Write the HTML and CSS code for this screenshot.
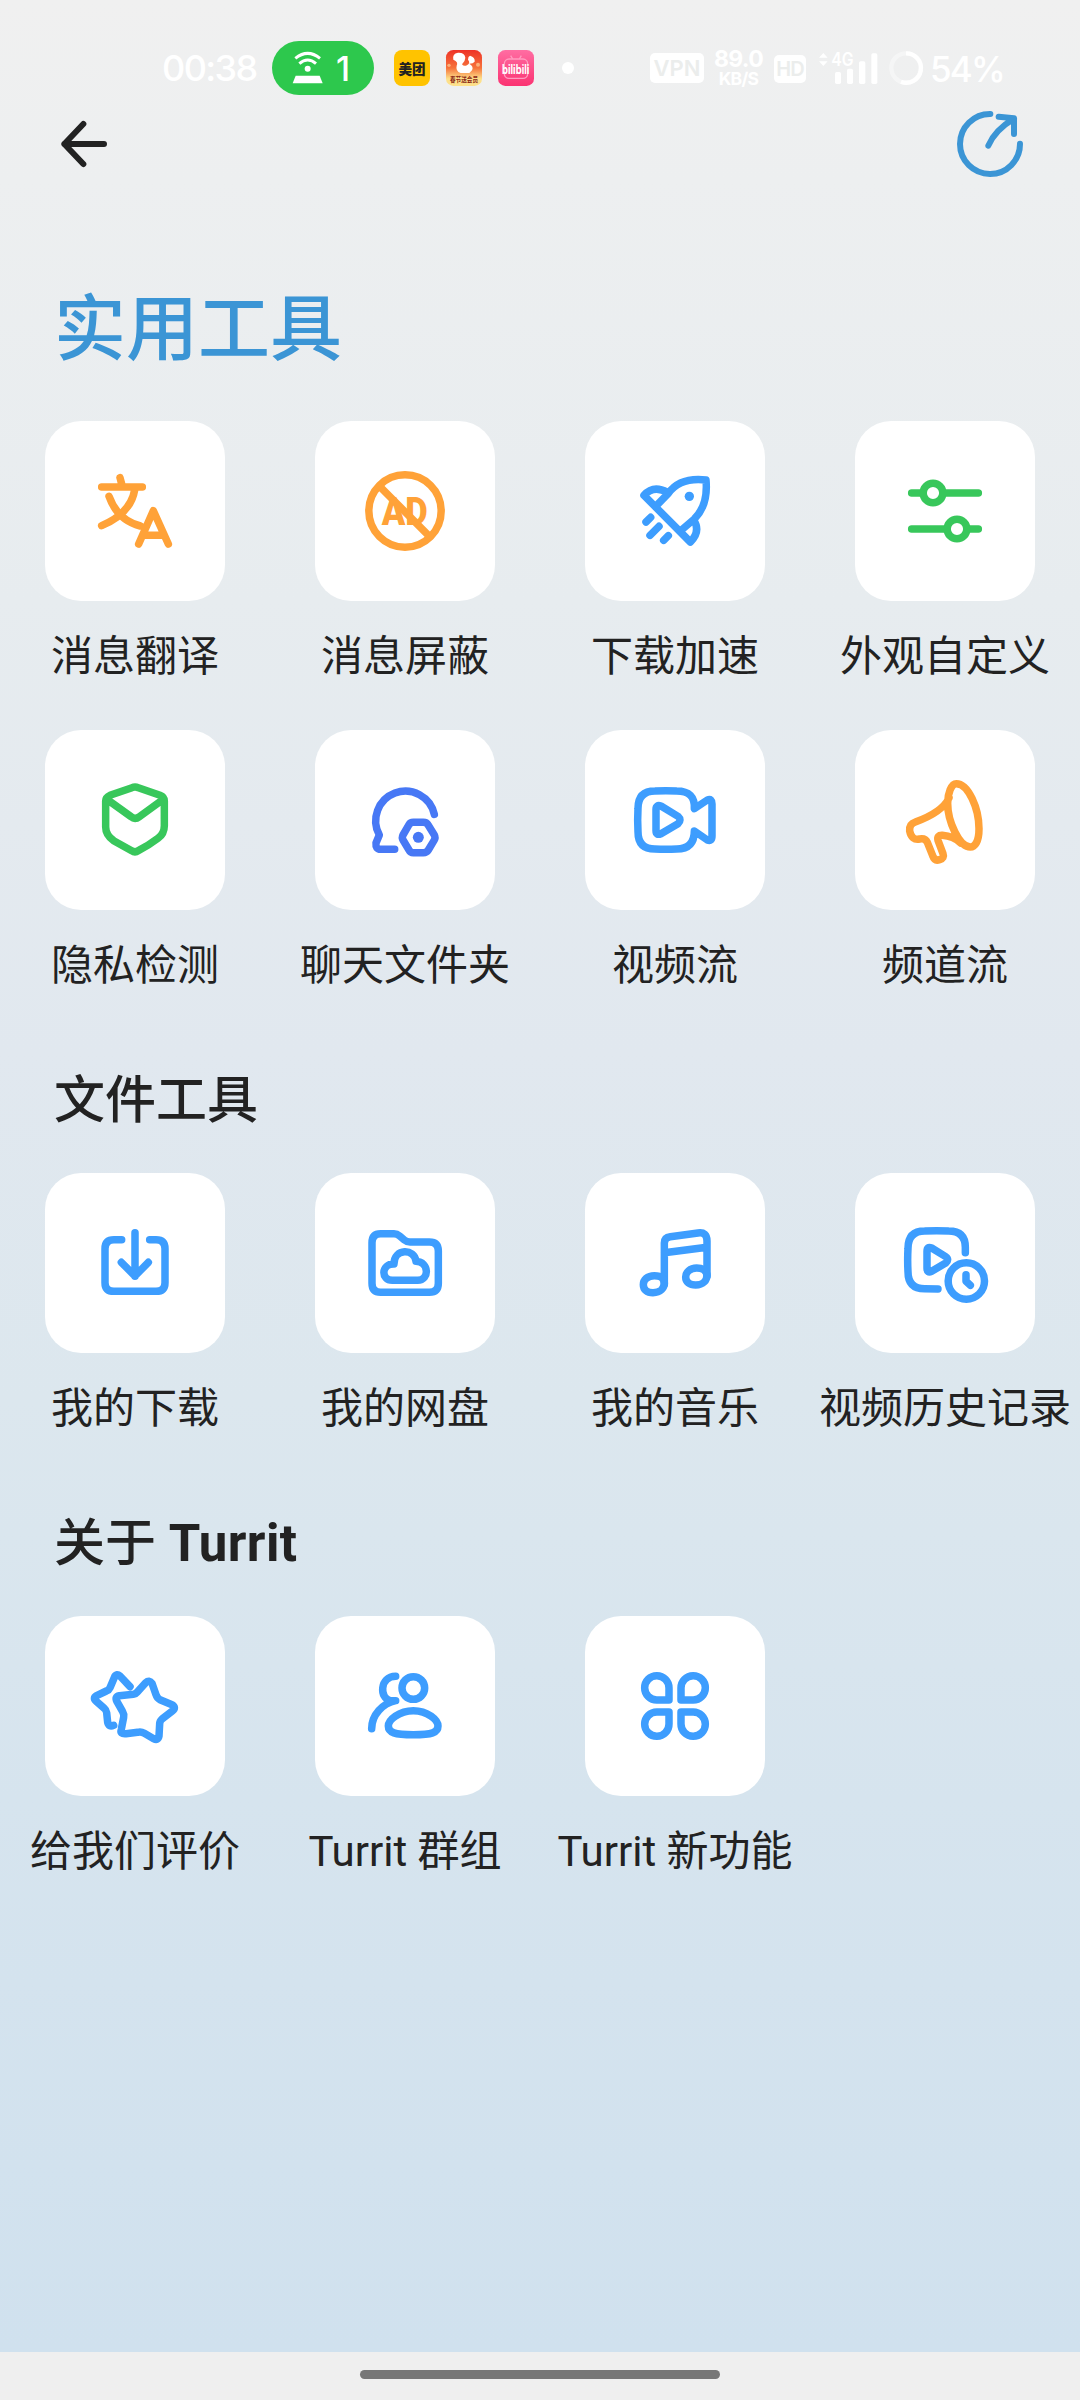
FILE: index.html
```html
<!DOCTYPE html>
<html lang="zh-CN">
<head>
<meta charset="utf-8">
<title>实用工具</title>
<link rel="stylesheet" href="styles.css">
</head>
<body>
<div class="screen">
  <div class="status">
    <span class="clock">00:38</span>
    <span class="hotspot">
      <svg width="32" height="34" viewBox="457 64 96 102"><g fill="none" stroke="#fff" stroke-width="9"><path d="M467 86Q504 56 541 86"/><path d="M479 102Q504 80 529 102"/></g><circle cx="504" cy="117" r="9" fill="#fff"/><path d="M468 138H540L549 161H459Z" fill="#fff"/></svg>
      <span>1</span>
    </span>
    <span class="app app-mt">美团</span>
    <span class="app app-sq">
      <svg width="36" height="36" viewBox="918 63 108 108"><defs><linearGradient id="sq" x1="0" y1="0" x2="0" y2="1"><stop offset="0" stop-color="#ee3227"/><stop offset=".5" stop-color="#f6733b"/><stop offset=".8" stop-color="#fde08a"/></linearGradient></defs><rect x="918" y="63" width="108" height="108" rx="22" fill="url(#sq)"/><path d="M940 92Q936 74 954 71Q974 70 976 86Q976 96 966 106Q972 114 982 108Q992 102 984 92Q984 82 990 80Q1006 84 1004 98Q1000 104 988 104Q1002 112 996 124L988 132H962Q946 126 950 110Q956 98 940 92Z" fill="#fff"/><circle cx="927" cy="109" r="5" fill="#fbb07a"/><circle cx="1014" cy="107" r="6" fill="#fbb07a"/><text x="930" y="160" class="sq-text" textLength="84" lengthAdjust="spacingAndGlyphs">春节送会员</text></svg>
    </span>
    <span class="app app-bili">
      <svg width="36" height="36" viewBox="1074 63 108 108"><defs><linearGradient id="bl" x1="0" y1="0" x2="0" y2="1"><stop offset="0" stop-color="#ff6da2"/><stop offset="1" stop-color="#fb3372"/></linearGradient></defs><rect x="1074" y="63" width="108" height="108" rx="22" fill="url(#bl)"/><g fill="none" stroke="#ff9cc0" stroke-width="4"><rect x="1093" y="90" width="70" height="58" rx="14"/><path d="M1112 80L1118 90M1144 80L1138 90"/></g><text x="1086" y="134" class="bili-text" textLength="82" lengthAdjust="spacingAndGlyphs">bilibili</text></svg>
    </span>
    <span class="dot"></span>
    <span class="vpn">VPN</span>
    <span class="speed"><b>89.0</b><i>KB/S</i></span>
    <span class="hd">HD</span>
    <svg class="signal" width="64" height="34" viewBox="652 64 192 102"><g fill="#fff"><path d="M658 84L671 70L684 84ZM658 95L671 109L684 95Z"/><rect x="706" y="127" width="18" height="36" rx="5"/><rect x="742" y="117" width="18" height="46" rx="5"/><rect x="778" y="95" width="19" height="68" rx="5"/><rect x="815" y="71" width="18" height="92" rx="5"/></g><text x="695" y="109" class="g4" textLength="67" lengthAdjust="spacingAndGlyphs">4G</text></svg>
    <svg class="ring" width="34" height="34" viewBox="869 64 102 102"><g fill="none" stroke="#fff" stroke-width="13"><circle cx="920" cy="115" r="44" opacity=".4"/><path d="M920 71A44 44 0 1 1 905 156"/></g></svg>
    <span class="battery">54%</span>
  </div>

  <header class="toolbar">
    <svg width="52" height="52" viewBox="168 54 156 156" class="stroke dark"><path d="M306 132H187M244 72L187 132L244 192"/></svg>
    <svg width="72" height="72" viewBox="1062 234 216 216" class="stroke accent"><path d="M1171 252A90 90 0 1 0 1260 341M1165 347Q1185 300 1242 266M1196 260L1242 265V312"/></svg>
  </header>

  <main>
    <h1>实用工具</h1>
    <div class="grid">
      <div class="item"><div class="tile"><svg viewBox="45 33 540 540" class="stroke orange"><path d="M270 203L275 222M215 231H337M237 259Q262 330 331 348M215 347Q302 310 314 240M326 402L370 302L415 402M344 376H398"/></svg></div><span class="label">消息翻译</span></div>
      <div class="item"><div class="tile"><svg viewBox="855 33 540 540" class="stroke orange"><circle cx="1125" cy="303" r="108.500"/><path d="M1049 229L1199 380"/><text x="1055" y="345" class="ad" textLength="138" lengthAdjust="spacingAndGlyphs">AD</text></svg></div><span class="label">消息屏蔽</span></div>
      <div class="item"><div class="tile"><svg viewBox="75 33 540 540" class="stroke blue"><path d="M290 286L325 250Q360 201 438 210Q445 285 403 327L361 363M252 256L391 396M252 256Q280 224 322 247M391 396Q423 364 401 330"/><path d="M258 336L272 322M270 376L297 349M311 391L325 377"/><circle cx="388" cy="259" r="14" class="solid"/></svg></div><span class="label">下载加速</span></div>
      <div class="item"><div class="tile"><svg viewBox="885 33 540 540" class="stroke green"><path d="M1055 249H1090M1150 249H1255M1055 357H1160M1220 357H1255"/><circle cx="1119" cy="249" r="29.500"/><circle cx="1191" cy="357" r="29.500"/></svg></div><span class="label">外观自定义</span></div>
      <div class="item"><div class="tile"><svg viewBox="45 30 540 540" class="stroke green"><path d="M306 203Q315 199 325 203L390 226Q403 231 403 243V317Q403 341 384 355Q358 375 325 392Q315 399 305 392L251 362Q227 345 227 321V243Q227 232 240 226ZM232 239L303 290Q315 300 328 290L398 239"/></svg></div><span class="label">隐私检测</span></div>
      <div class="item"><div class="tile"><svg viewBox="855 30 540 540" class="stroke indigo"><path d="M1213 283A89 89 0 1 0 1048 345L1038 369Q1036 388 1052 388H1094M1150 307H1180Q1190 307 1194 314L1213 345Q1217 353 1213 360L1195 390Q1190 398 1180 398H1150Q1141 398 1137 390L1119 360Q1115 353 1119 345L1137 314Q1141 307 1150 307Z"/><circle cx="1165" cy="352" r="16.500" class="solid"/></svg></div><span class="label">聊天文件夹</span></div>
      <div class="item"><div class="tile"><svg viewBox="75 30 540 540" class="stroke blue"><path d="M403 266Q406 213 350 213Q318 211 285 213Q234 213 234 265Q232 300 234 335Q234 387 285 387Q318 389 350 387Q403 387 403 333L442 360Q456 366 456 348V252Q456 235 442 240ZM288 268Q288 253 303 258L354 289Q366 300 354 311L303 341Q288 347 288 332Z"/></svg></div><span class="label">视频流</span></div>
      <div class="item"><div class="tile"><svg viewBox="885 30 540 540" class="stroke orange"><path d="M1189 191C1225 191 1257 266 1257 326C1257 366 1244 381 1231 381C1198 381 1163 305 1163 250C1163 220 1174 191 1189 191ZM1167 234C1150 270 1110 290 1066 306Q1047 312 1049 333Q1055 362 1079 357Q1096 354 1102 367L1118 407Q1124 424 1139 419Q1154 414 1149 401L1134 361Q1130 345 1147 346Q1181 349 1202 369"/></svg></div><span class="label">频道流</span></div>
    </div>

    <h2>文件工具</h2>
    <div class="grid">
      <div class="item"><div class="tile"><svg viewBox="45 369 540 540" class="stroke blue"><path d="M275 569H252Q225 569 225 596V698Q225 724 252 724H378Q405 724 405 698V596Q405 569 378 569H359M315 548V679M274 637L315 678L355 637"/></svg></div><span class="label">我的下载</span></div>
      <div class="item"><div class="tile"><svg viewBox="855 369 540 540" class="stroke blue"><path d="M1052 551H1092Q1101 551 1109 558L1123 570Q1130 576 1140 576H1198Q1225 576 1225 603V700Q1225 727 1198 727H1052Q1026 727 1026 700V578Q1026 551 1052 551ZM1092 642C1092 594 1154 595 1158 634C1198 636 1199 691 1163 691H1087C1052 691 1053 641 1092 642Z"/></svg></div><span class="label">我的网盘</span></div>
      <div class="item"><div class="tile"><svg viewBox="75 39 540 540" class="stroke blue"><path d="M313 373V249Q313 232 331 230L414 219Q441 215 441 243V348M313 278L441 262"/><path d="M313 373C313 351 298 347 283 347C262 347 250 360 250 374C250 388 260 398 279 398C302 398 313 384 313 368ZM441 348C441 328 424 324 410 324C390 324 377 337 377 351C377 366 388 375 407 375C430 375 441 361 441 344Z"/></svg></div><span class="label">我的音乐</span></div>
      <div class="item"><div class="tile"><svg viewBox="885 39 540 540" class="stroke blue"><path d="M1216 278V262Q1216 213 1166 213Q1130 211 1094 213Q1044 213 1044 265Q1042 300 1044 335Q1044 386 1094 386L1134 387M1101 274Q1101 258 1115 264L1157 290Q1169 299 1157 309L1115 334Q1101 340 1101 325Z"/><circle cx="1219" cy="363" r="54.500"/><path d="M1218 344V364L1231 376"/></svg></div><span class="label">视频历史记录</span></div>
    </div>

    <h2>关于 <b>Turrit</b></h2>
    <div class="grid">
      <div class="item"><div class="tile"><svg viewBox="135 378 540 540" class="stroke blue"><path d="M390 590L360 558Q350 549 344 560L330 593Q327 600 319 603L290 617Q277 624 289 634L313 655Q319 660 320 668L323 697Q326 712 341 706"/><path d="M437 578Q448 568 456 580L468 614Q471 624 480 629L516 644Q530 653 517 663L486 687Q479 693 479 702L477 738Q474 753 461 746L433 730Q423 724 413 727L378 731Q359 733 364 718L371 682Q373 673 368 665L351 635Q343 620 358 617L400 613Q407 612 412 606Z"/></svg></div><span class="label">给我们评价</span></div>
      <div class="item"><div class="tile"><svg viewBox="945 378 540 540" class="stroke blue"><circle cx="1240" cy="594" r="34"/><path d="M1187 559C1138 560 1138 626 1171 632L1187 632C1148 640 1115 675 1115 716M1240 662C1283 662 1314 690 1314 708C1314 728 1296 734 1240 734C1184 734 1165 728 1165 708C1165 690 1197 662 1240 662Z"/></svg></div><span class="label">Turrit 群组</span></div>
      <div class="item"><div class="tile"><svg viewBox="135 48 540 540" class="stroke blue"><path d="M387 300H351A36.500 36.500 0 1 1 387 264ZM423 300V264A36.500 36.500 0 1 1 459 300ZM387 336V372A36.500 36.500 0 1 1 351 336ZM423 336H459A36.500 36.500 0 1 1 423 372Z"/></svg></div><span class="label">Turrit 新功能</span></div>
    </div>
  </main>
  <footer class="navbar"><span class="handle"></span></footer>
</div>
</body>
</html>
```
FILE: styles.css
```css
* { box-sizing: border-box; }
body {
  margin: 0;
  font-family: Roboto, "Noto Sans CJK SC", sans-serif;
  color: #222;
}
.screen {
  width: 1080px;
  height: 2400px;
  overflow: hidden;
  display: flex;
  flex-direction: column;
  background: linear-gradient(#f0f0f0, #edeff0 180px, #e7ecef 600px, #e1e8ef 1050px, #dce7ee 1400px, #d6e4ee 1800px, #d0e1ee 2350px);
}

.status {
  height: 108px;
  padding: 28px 0 0 162px;
  display: flex;
  align-items: center;
  color: #fff;
  white-space: nowrap;
  font-family: Inter, sans-serif;
}
.status svg { overflow: visible; }
.clock { width: 110px; font-size: 36px; font-weight: 500; letter-spacing: -1.6px; }
.hotspot {
  width: 102px;
  height: 54px;
  border-radius: 27px;
  background: #2dc84d;
  display: flex;
  align-items: center;
  padding: 0 24px 0 20px;
  justify-content: space-between;
  font-size: 34px;
  font-weight: 500;
}
.app { width: 36px; height: 36px; border-radius: 8px; display: flex; }
.app-mt {
  margin-left: 20px;
  background: #ffc300;
  color: #222;
  align-items: center;
  justify-content: center;
  font: 900 13.5px "Noto Sans CJK SC", sans-serif;
}
.app-sq, .app-bili { margin-left: 16px; }
.sq-text { font: 700 20px "Noto Sans CJK SC", sans-serif; fill: #8c2a16; }
.bili-text { font: 700 38px Inter, sans-serif; fill: #fff; }
.dot { width: 12px; height: 12px; border-radius: 50%; background: #fff; margin-left: 28px; }
.vpn, .hd {
  background: #fff;
  color: #ebedec;
  border-radius: 5px;
  text-align: center;
  font-weight: 600;
}
.vpn { width: 54px; height: 30px; line-height: 30px; font-size: 22px; margin: 0 10px 0 76px; }
.hd { width: 32px; height: 28px; line-height: 28px; font-size: 20px; margin: 2px 0 0 11px; letter-spacing: -1px; }
.speed { width: 49px; display: flex; flex-direction: column; align-items: center; }
.speed b { font-size: 23px; line-height: 21px; font-weight: 700; letter-spacing: -.7px; }
.speed i { font-size: 17.5px; line-height: 18px; font-weight: 700; font-style: normal; letter-spacing: -.7px; }
.signal { margin-left: 11px; }
.ring { margin-left: 8px; }
.g4 { font: 600 54px Inter, sans-serif; fill: #fff; }
.battery { margin: 2px 0 0 7px; font-size: 35px; font-weight: 500; letter-spacing: -1.8px; }

.toolbar {
  height: 72px;
  padding: 0 54px 0 58px;
  display: flex;
  justify-content: space-between;
  align-items: center;
}
.stroke { fill: none; stroke: currentColor; stroke-width: 22.5; stroke-linecap: round; stroke-linejoin: round; }
.solid { fill: currentColor; stroke: none; }
.dark, .accent { stroke-width: 18; }
.dark { color: #222; }
.accent { color: #3b95d5; }
.orange { color: #ffa238; }
.blue { color: #3d9dfe; }
.green { color: #38c75b; }
.indigo { color: #4778f5; }
.ad { font: 900 116px Roboto, sans-serif; fill: currentColor; stroke: none; }

main { flex: 1; }
h1 {
  margin: 97px 0 0 54px;
  height: 144px;
  line-height: 106px;
  font-size: 72px;
  font-weight: 500;
  color: #3b95d5;
}
h2 {
  margin: 0 0 0 54px;
  height: 134px;
  line-height: 76px;
  padding-top: 24px;
  font-size: 51px;
  font-weight: 500;
}
h2 b { font-weight: 700; letter-spacing: .4px; }
.grid { display: grid; grid-template-columns: repeat(4, 270px); }
.item {
  height: 309px;
  display: flex;
  flex-direction: column;
  align-items: center;
}
.tile { width: 180px; height: 180px; border-radius: 36px; background: #fff; }
.tile svg { display: block; width: 180px; height: 180px; }
.label {
  margin-top: 25px;
  line-height: 62px;
  font-size: 42px;
  white-space: nowrap;
  font-weight: 400;
}
.navbar {
  height: 48px;
  padding-top: 18px;
  background: #efefef;
  display: flex;
  justify-content: center;
}
.handle { width: 360px; height: 9px; border-radius: 5px; background: #777; }
```
